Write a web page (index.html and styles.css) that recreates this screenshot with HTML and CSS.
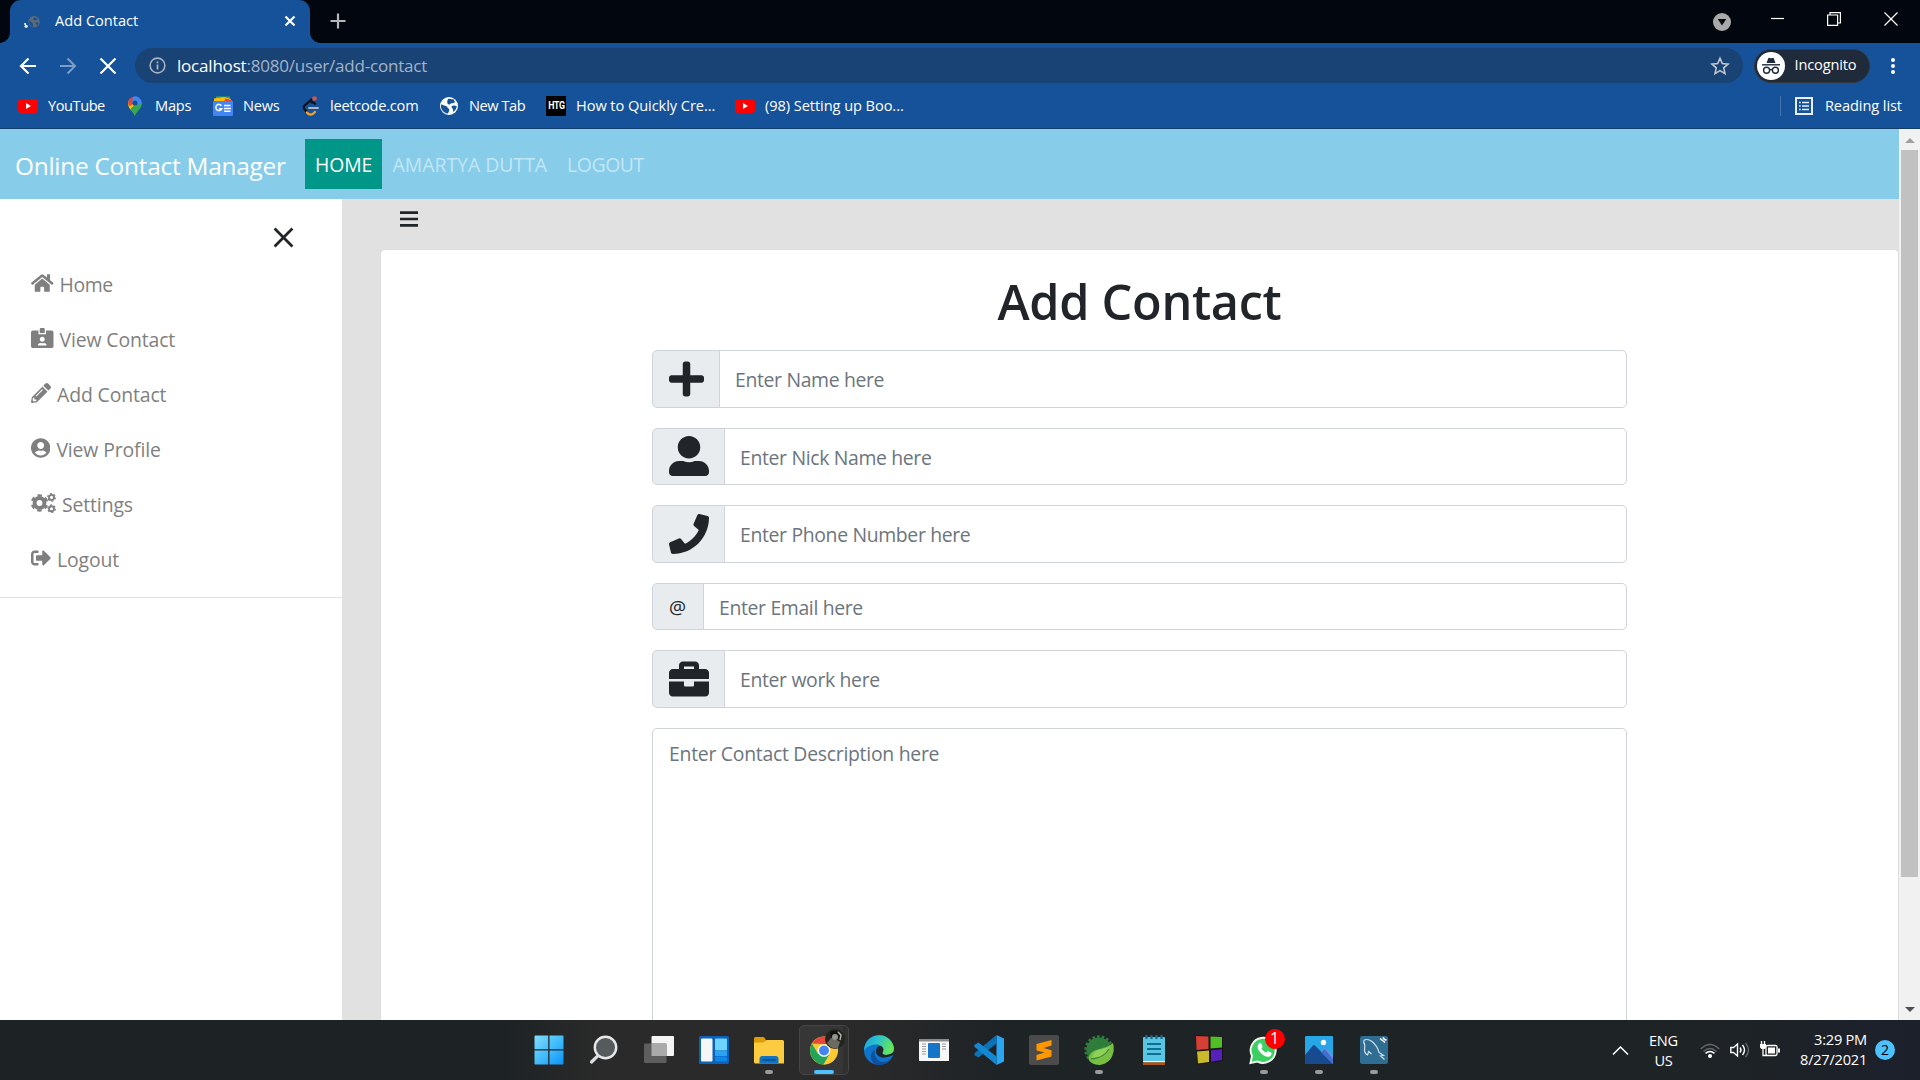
FILE: index.html
```html
<!DOCTYPE html>
<html lang="en">
<head>
<meta charset="utf-8">
<title>Add Contact</title>
<link rel="stylesheet" href="styles.css">
</head>
<body>
<div class="screen">

  <!-- Browser tab strip -->
  <header class="tabstrip">
    <div class="tab">
      <svg class="tab-icon" viewBox="0 0 18 18"><circle cx="3" cy="13.500" r="1.500" fill="#fff"/><circle cx="2" cy="11.400" r="1" fill="#fff"/><circle cx="10.500" cy="9.300" r="5.400" fill="#5f6a78"/><path d="M6 8l3 2.500 1 3.500-2-.5-2.500-3zM10.500 5l3.500 1.500-2 1.500-2.500-.8zM11.500 10h3.500l-1.500 3z" fill="#15529a"/></svg>
      <span class="tab-title">Add Contact</span>
      <svg class="tab-close" viewBox="0 0 12 12"><path d="M1.500 1.500l9 9M10.500 1.500l-9 9" stroke="#fff" stroke-width="2.200"/></svg>
    </div>
    <svg class="new-tab" viewBox="0 0 16 16"><path d="M8 .500v15M.500 8h15" stroke="#b4b6b8" stroke-width="2.200"/></svg>
    <div class="window-controls">
      <svg class="w-search" viewBox="0 0 18 18"><circle cx="9" cy="9" r="9" fill="#a9a9a9"/><path d="M4.800 6h8.400L9 12.500z" fill="#02060f"/></svg>
      <svg class="w-min" viewBox="0 0 14 14"><path d="M0 7.500h13" stroke="#fff" stroke-width="1.200"/></svg>
      <svg class="w-max" viewBox="0 0 14 14"><path d="M.600 3h10v10.400H.600zM3 3V.600h10.400V11h-2.800" fill="none" stroke="#fff" stroke-width="1.200"/></svg>
      <svg class="w-close" viewBox="0 0 14 14"><path d="M.500.500l13 13M13.500.500l-13 13" stroke="#fff" stroke-width="1.200"/></svg>
    </div>
  </header>

  <!-- Address bar -->
  <div class="toolbar">
    <svg class="t-back" viewBox="0 0 18 18"><path d="M17 9H2M9.500 1.500L2 9l7.500 7.500" fill="none" stroke="#fff" stroke-width="2.200"/></svg>
    <svg class="t-forward" viewBox="0 0 18 18"><path d="M1 9h15M8.500 1.500L16 9l-7.500 7.500" fill="none" stroke="#7d9cc6" stroke-width="2"/></svg>
    <svg class="t-stop" viewBox="0 0 18 18"><path d="M1.500 1.500l15 15M16.500 1.500l-15 15" stroke="#fff" stroke-width="2.200"/></svg>
    <div class="omnibox">
      <svg class="o-info" viewBox="0 0 18 18"><circle cx="9" cy="9" r="7.800" fill="none" stroke="#aab2bd" stroke-width="1.700"/><path d="M9 8v5.200M9 4.700v1.900" stroke="#aab2bd" stroke-width="1.900"/></svg>
      <span class="url"><b>localhost</b>:8080/user/add-contact</span>
      <svg class="o-star" viewBox="0 0 20 20"><path d="M10 2.200l2.300 5.400 5.800.500-4.400 3.800 1.300 5.700-5-3-5 3 1.300-5.700L1.900 8.100l5.800-.5z" fill="none" stroke="#c4c7cb" stroke-width="1.600"/></svg>
    </div>
    <div class="incognito">
      <svg viewBox="0 0 28 28"><circle cx="14" cy="14" r="14" fill="#fff"/><path d="M9.500 11l1.700-4.600c.2-.6.700-.7 1.300-.5l1.500.4 1.500-.4c.6-.2 1.100-.1 1.300.5l1.700 4.600z" fill="#1f2a3a"/><path d="M5 12.800h18" stroke="#1f2a3a" stroke-width="1.400"/><g fill="none" stroke="#1f2a3a" stroke-width="1.400"><circle cx="9.600" cy="18.300" r="3"/><circle cx="18.400" cy="18.300" r="3"/><path d="M12.600 18q1.400-1 2.800 0"/></g></svg>
      <span>Incognito</span>
    </div>
    <svg class="t-menu" viewBox="0 0 4 16" fill="#fff"><circle cx="2" cy="2" r="2"/><circle cx="2" cy="8" r="2"/><circle cx="2" cy="14" r="2"/></svg>
  </div>

  <!-- Bookmarks -->
  <div class="bookmarks">
    <div class="bm tight"><svg viewBox="0 0 20 20"><rect y="3" width="20" height="14" rx="3.500" fill="#f00"/><path d="M8 7v6l5-3z" fill="#fff"/></svg><span>YouTube</span></div>
    <div class="bm"><svg viewBox="0 0 20 20"><path d="M10 20c-.7-4-6.800-7-6.800-12.800h6.800z" fill="#fbbc04"/><path d="M10 20c.7-4 6.900-7 6.900-12.800L14.500 3 5 13.500C7.500 16 9 17 10 20z" fill="#34a853"/><path d="M3.200 7.200A6.800 6.800 0 0 1 4.900 2.700L10 7.200l-5 6Q3.200 10.500 3.200 7.200z" fill="#fbbc04"/><path d="M4.900 2.700A6.900 6.900 0 0 1 8 .7L10 7 4.300 10Q2 6 4.900 2.700z" fill="#ea4335"/><path d="M8 .700a6.900 6.900 0 0 1 8.900 6.500L10 10 7 6z" fill="#4285f4"/><circle cx="10" cy="7" r="2.500" fill="#174e91"/></svg><span>Maps</span></div>
    <div class="bm"><svg viewBox="0 0 20 20"><path d="M3 .500h14V6H3z" fill="#34a853"/><path d="M1 2.500L11 1l7 2v4H1z" fill="#fbbc04"/><path d="M12 2.500l7 1.500v3h-8z" fill="#ea4335"/><rect y="5" width="20" height="15" rx="1" fill="#4285f4"/><path d="M8.500 9.700a3.100 3.100 0 1 0 .3 3H6" fill="none" stroke="#fff" stroke-width="1.500"/><path d="M11 9.500h6.500M11 12.400h7M11 15.300h6.500" stroke="#fff" stroke-width="1.500"/></svg><span>News</span></div>
    <div class="bm"><svg viewBox="0 0 20 20" fill="none" stroke-linecap="round" stroke-width="2.300"><path d="M11.500 3.500L4.200 10Q3 11.500 4.200 13L6.500 15.500" stroke="#111"/><path d="M7 16.500q3.500 4.500 8-.5" stroke="#ffa116"/><path d="M9 12h9" stroke="#b3b3b3" stroke-width="1.900"/><path d="M11.500 6.300q2-.3 3.500 1.400" stroke="#111"/><circle cx="14.500" cy="2.500" r="2.300" fill="#d9534f" stroke="none"/></svg><span>leetcode.com</span></div>
    <div class="bm tight"><svg viewBox="0 0 20 20"><circle cx="10" cy="10" r="9" fill="#fff"/><path d="M2 8.500c2 0 3 1.500 5.500 1.700 1.500.3.500 2 2 2.300 1.500.5.500 3-.5 5C4 17 1.500 13 2 8.500zM9 3c2-.5 3 .5 5.500.3L16 6c-1 1.500-2 1-3.500 1.200C11 7.500 11.500 9 10 8.500S7.500 6.500 9 3zM13 10c1.500-1 3-.5 4.800 0-.3 3-2 5-3.800 6 0-2 .5-2-.5-3.500-.8-1-1.500-1.500-.5-2.500z" fill="#15529a"/></svg><span>New Tab</span></div>
    <div class="bm wide"><span class="htg"><span>HTG</span></span><span>How to Quickly Cre...</span></div>
    <div class="bm wide"><svg viewBox="0 0 20 20"><rect y="3" width="20" height="14" rx="3.500" fill="#f00"/><path d="M8 7v6l5-3z" fill="#fff"/></svg><span>(98) Setting up Boo...</span></div>
    <div class="reading">
      <svg viewBox="0 0 18 18"><rect x="1" y="1" width="16" height="16" fill="none" stroke="#e8eefb" stroke-width="2"/><path d="M4 5.500h1.700M4 9h1.700M4 12.500h1.700M7 5.500h7M7 9h7M7 12.500h7" stroke="#e8eefb" stroke-width="1.600"/></svg>
      <span>Reading list</span>
    </div>
  </div>

  <!-- Page -->
  <div class="viewport">
    <div class="page">
      <nav class="navbar">
        <span class="brand">Online Contact Manager</span>
        <span class="nav-link active">HOME</span>
        <span class="nav-link name">AMARTYA DUTTA</span>
        <span class="nav-link last">LOGOUT</span>
      </nav>
      <div class="body">
        <aside class="sidebar">
          <svg class="side-close" viewBox="0 0 20 20"><path d="M1.500 1.500l17 17M18.500 1.500l-17 17" stroke="#212529" stroke-width="2.600"/></svg>
          <div class="item short"><svg width="22.500" height="20" viewBox="0 0 576 512"><path d="M280.370 148.260L96 300.110V464a16 16 0 0 0 16 16l112.060-.29a16 16 0 0 0 15.920-16V368a16 16 0 0 1 16-16h64a16 16 0 0 1 16 16v95.640a16 16 0 0 0 16 16.050L464 480a16 16 0 0 0 16-16V300L295.670 148.260a12.190 12.190 0 0 0-15.300 0zM571.600 251.470L488 182.560V44.050a12 12 0 0 0-12-12h-56a12 12 0 0 0-12 12v72.610L318.470 43a48 48 0 0 0-61 0L4.340 251.470a12 12 0 0 0-1.600 16.900l25.500 31A12 12 0 0 0 45.150 301l235.220-193.740a12.190 12.190 0 0 1 15.300 0L530.900 301a12 12 0 0 0 16.900-1.600l25.500-31a12 12 0 0 0-1.700-16.930z"/></svg>Home</div>
          <div class="item"><svg width="22.500" height="20" viewBox="0 0 576 512"><path d="M528 64H384v96H192V64H48C21.500 64 0 85.500 0 112v352c0 26.500 21.500 48 48 48h480c26.500 0 48-21.500 48-48V112c0-26.500-21.500-48-48-48zM288 224c35.300 0 64 28.700 64 64s-28.700 64-64 64-64-28.700-64-64 28.700-64 64-64zm93.300 224H194.700c-10.400 0-18.800-10-15.600-19.800 8.300-25.600 32.400-44.200 60.900-44.200h8.200c12.300 5.100 25.700 8 39.800 8s27.600-2.900 39.800-8h8.200c28.400 0 52.500 18.500 60.900 44.200 3.200 9.900-5.200 19.800-15.600 19.800zM352 32c0-17.700-14.300-32-32-32h-64c-17.700 0-32 14.300-32 32v96h128V32z"/></svg>View Contact</div>
          <div class="item"><svg width="20" height="20" viewBox="0 0 512 512"><path d="M497.900 142.100l-46.100 46.100c-4.700 4.700-12.300 4.700-17 0l-111-111c-4.700-4.700-4.700-12.300 0-17l46.100-46.100c18.700-18.700 49.100-18.700 67.900 0l60.100 60.100c18.800 18.700 18.800 49.100 0 67.900zM284.200 99.800L21.600 362.400.4 483.900c-2.900 16.400 11.400 30.600 27.800 27.800l121.500-21.300 262.600-262.600c4.700-4.700 4.700-12.300 0-17l-111-111c-4.800-4.700-12.400-4.700-17.100 0zM124.100 339.900c-5.500-5.500-5.500-14.300 0-19.800l154-154c5.500-5.500 14.300-5.500 19.800 0s5.500 14.300 0 19.800l-154 154c-5.500 5.500-14.300 5.500-19.800 0zM88 424h48v36.300l-64.500 11.300-31.100-31.100L51.700 376H88v48z"/></svg>Add Contact</div>
          <div class="item"><svg width="19.400" height="20" viewBox="0 0 496 512"><path d="M248 8C111 8 0 119 0 256s111 248 248 248 248-111 248-248S385 8 248 8zm0 96c48.600 0 88 39.400 88 88s-39.400 88-88 88-88-39.400-88-88 39.400-88 88-88zm0 344c-58.700 0-111.300-26.600-146.500-68.200 18.800-35.400 55.600-59.800 98.500-59.800 2.400 0 4.800.4 7.100 1.100 13 4.200 26.600 6.900 40.900 6.900 14.300 0 28-2.700 40.900-6.900 2.300-.7 4.700-1.100 7.100-1.100 42.900 0 79.700 24.400 98.500 59.800C359.300 421.400 306.700 448 248 448z"/></svg>View Profile</div>
          <div class="item"><svg width="25" height="20" viewBox="0 0 25 20" fill="none" stroke="#7f7f7f"><circle cx="8.500" cy="10" r="4.900" stroke-width="4"/><circle cx="8.500" cy="10" r="7.600" stroke-width="2.200" stroke-dasharray="4.400 3.560" stroke-dashoffset="2.200" transform="rotate(30 8.500 10)"/><circle cx="20.500" cy="4.400" r="2.500" stroke-width="1.900"/><circle cx="20.500" cy="4.400" r="3.800" stroke-width="1.200" stroke-dasharray="2 1.980"/><circle cx="20.500" cy="15.700" r="2.500" stroke-width="1.900"/><circle cx="20.500" cy="15.700" r="3.800" stroke-width="1.200" stroke-dasharray="2 1.980"/></svg>Settings</div>
          <div class="item"><svg width="20" height="20" viewBox="0 0 512 512"><path d="M497 273L329 441c-15 15-41 4.500-41-17v-96H152c-13.300 0-24-10.700-24-24v-96c0-13.300 10.700-24 24-24h136V88c0-21.400 25.900-32 41-17l168 168c9.300 9.400 9.300 24.600 0 34zM192 436v-40c0-6.600-5.400-12-12-12H96c-17.700 0-32-14.300-32-32V160c0-17.700 14.300-32 32-32h84c6.600 0 12-5.400 12-12V76c0-6.600-5.400-12-12-12H96c-53 0-96 43-96 96v192c0 53 43 96 96 96h84c6.600 0 12-5.400 12-12z"/></svg>Logout</div>
          <div class="divider"></div>
        </aside>
        <main class="content">
          <svg class="bars" viewBox="0 0 18 16"><path d="M0 1.700h18M0 8h18M0 14.300h18" stroke="#212529" stroke-width="2.700"/></svg>
          <section class="card">
            <h1>Add Contact</h1>
            <form>
              <div class="group"><span class="addon"><svg width="35" height="40" viewBox="0 0 448 512"><path d="M416 208H272V64c0-17.670-14.330-32-32-32h-32c-17.670 0-32 14.330-32 32v144H32c-17.670 0-32 14.330-32 32v32c0 17.670 14.330 32 32 32h144v144c0 17.670 14.330 32 32 32h32c17.670 0 32-14.330 32-32V304h144c17.670 0 32-14.330 32-32v-32c0-17.670-14.330-32-32-32z"/></svg></span><input type="text" placeholder="Enter Name here"></div>
              <div class="group"><span class="addon"><svg width="40" height="40" viewBox="0 0 512 512"><path d="M256 288c79.500 0 144-64.500 144-144S335.500 0 256 0 112 64.500 112 144s64.500 144 144 144zm128 32h-55.100c-22.200 10.200-46.900 16-72.900 16s-50.600-5.800-72.900-16H128C57.300 320 0 377.300 0 448v16c0 26.500 21.500 48 48 48h416c26.500 0 48-21.500 48-48v-16c0-70.700-57.300-128-128-128z"/></svg></span><input type="text" placeholder="Enter Nick Name here"></div>
              <div class="group"><span class="addon"><svg width="40" height="40" viewBox="0 0 512 512"><path d="M493.400 24.600l-104-24c-11.300-2.600-22.900 3.300-27.500 13.900l-48 112c-4.200 9.800-1.400 21.300 6.900 28l60.600 49.600c-36 76.700-98.900 140.500-177.200 177.200l-49.600-60.600c-6.800-8.300-18.200-11.100-28-6.900l-112 48C3.900 366.500-2 378.100.6 389.400l24 104C27.100 504.200 36.700 512 48 512c256.100 0 464-207.500 464-464 0-11.200-7.700-20.900-18.600-23.400z"/></svg></span><input type="text" placeholder="Enter Phone Number here"></div>
              <div class="group email"><span class="addon">@</span><input type="text" placeholder="Enter Email here"></div>
              <div class="group"><span class="addon"><svg width="40" height="40" viewBox="0 0 512 512"><path d="M320 336c0 8.840-7.160 16-16 16h-96c-8.840 0-16-7.160-16-16v-48H0v144c0 25.600 22.400 48 48 48h416c25.600 0 48-22.400 48-48V288H320v48zm144-208h-80V80c0-25.600-22.400-48-48-48H176c-25.600 0-48 22.400-48 48v48H48c-25.600 0-48 22.400-48 48v80h512v-80c0-25.600-22.400-48-48-48zm-144 0H192V96h128v32z"/></svg></span><input type="text" placeholder="Enter work here"></div>
              <textarea placeholder="Enter Contact Description here"></textarea>
            </form>
          </section>
        </main>
      </div>
    </div>
    <div class="scrollbar">
      <svg viewBox="0 0 10 5"><path d="M0 5l5-5 5 5z" fill="#a0a0a0"/></svg>
      <div class="thumb"></div>
      <svg class="down" viewBox="0 0 10 5"><path d="M0 0l5 5 5-5z" fill="#505050"/></svg>
    </div>
  </div>

  <!-- Taskbar -->
  <footer class="taskbar">
    <div class="apps">
      <div class="app"><svg viewBox="0 0 30 30"><defs><linearGradient id="win" gradientUnits="userSpaceOnUse" x1="0" y1="0" x2="30" y2="30"><stop offset="0" stop-color="#84deff"/><stop offset=".5" stop-color="#43bdfb"/><stop offset="1" stop-color="#0a90f8"/></linearGradient></defs><path d="M.500 1.500A1 1 0 0 1 1.500.500H14.200V14.200H.500zM15.500.500H28.500a1 1 0 0 1 1 1V14.200H15.500zM.500 15.500H14.200V29.500H1.500a1 1 0 0 1-1-1zM15.500 15.500H29.500V28.500a1 1 0 0 1-1 1H15.500z" fill="url(#win)"/></svg></div>
      <div class="app"><svg viewBox="0 0 30 30"><circle cx="16.500" cy="12.500" r="10.700" fill="#555a5d" stroke="#e6e8ea" stroke-width="2.400"/><path d="M8.800 20.800L2.500 27" stroke="#dcdfe2" stroke-width="3.200" stroke-linecap="round"/></svg></div>
      <div class="app"><svg viewBox="0 0 30 30"><rect x="7.500" y="1" width="22.500" height="20" rx="1" fill="#f4f4f4"/><rect y="8.500" width="22.500" height="19.500" rx="1" fill="#5e5e5e"/><path d="M7.500 8.500h15V21h-15z" fill="#aaa"/></svg></div>
      <div class="app"><svg viewBox="0 0 30 30"><rect y="1" width="30" height="28" rx="1.500" fill="#0c61b8"/><rect x="2" y="3.500" width="11.500" height="23" rx="1.200" fill="#f6f6f6"/><rect x="16" y="3.500" width="12" height="12" rx="1" fill="#6cd4fd"/><rect x="16" y="16" width="12" height="5" fill="#28a3f3"/><rect x="16" y="21.500" width="12" height="5" rx="1" fill="#0d87e8"/></svg></div>
      <div class="app"><svg viewBox="0 0 30 30"><path d="M0 3.500q0-1.500 1.500-1.500h7.500q1.500 0 2 1.500l1 2V12H0z" fill="#dd9c05"/><path d="M0 7.500h9.500l3-2.500H28.500Q30 5 30 6.500V28.500H1.500Q0 28.500 0 27z" fill="#fdcb3f"/><path d="M5.500 28.500V24q0-3 3-3h13q3 0 3 3v4.500z" fill="#1273c4"/><path d="M9 25h12" stroke="#0b4f8f" stroke-width="1.600" stroke-linecap="round"/></svg><i class="mark"></i></div>
      <div class="app open"><svg viewBox="0 0 30 30"><circle cx="15" cy="15.500" r="14" fill="#fbc933"/><path d="M2.900 8.500A14 14 0 0 1 27.100 8.500L15 9z" fill="#e8453c"/><path d="M2.900 8.500A14 14 0 0 0 15 29.500l6-10.500-12 0z" fill="#22a45a"/><path d="M27.100 9H15a6.500 6.500 0 0 1 5.500 10L14.500 29.500A14 14 0 0 0 27.100 9z" fill="#fbc933"/><circle cx="15" cy="15.500" r="6.300" fill="#fff"/><circle cx="15" cy="15.500" r="5" fill="#4484f3"/></svg><svg class="avatar" viewBox="0 0 20 20"><circle cx="10" cy="10" r="10" fill="#23231f"/><path d="M2 14l4-5 4 1 5 3-2 6q-7 2-11-5z" fill="#6a6a62"/><path d="M5 3q5-3 8 1l2 5-5 2-4-3z" fill="#11110f"/><circle cx="10" cy="8" r="3" fill="#97968c"/><path d="M13 3l3 3-1 5" fill="none" stroke="#b7b6ac" stroke-width="1.400"/></svg><i class="mark"></i></div>
      <div class="app"><svg viewBox="0 0 30 30"><defs><linearGradient id="eg" x1="0" y1="0" x2="1" y2=".3"><stop offset="0" stop-color="#1f9be0"/><stop offset=".5" stop-color="#2cc3c9"/><stop offset="1" stop-color="#63e65a"/></linearGradient></defs><circle cx="15" cy="15" r="15" fill="#0c74ca"/><path d="M.500 12A15 15 0 0 1 30 13c0 5-4 7-7.500 7-3.500 0-4.500-1.500-4-2.500 2.500-4-1-8-6-8C7 9.500 2 12 .100 16z" fill="url(#eg)"/><path d="M11 15c-2 5 2 12 8 12 4 0 6-1.500 8-3.500C22 31 14 31 10.500 29 5 25 6 17 11 15z" fill="#104f9f"/><path d="M18.500 17.500c2.300-4-.5-7-3-6.500-4 1.500-4.500 7-1.500 9.500 4 3.500 10 2 15.500-.8 .8-1.200 1-2.500.8-3.500-3 4.500-12.800 4.800-11.800 1.300z" fill="#212529"/></svg></div>
      <div class="app"><svg viewBox="0 0 30 30"><rect y="4" width="30" height="22" fill="#f7f7f7"/><rect y="4" width="30" height="2.500" fill="#8c8c8c"/><rect x="9" y="8" width="12" height="15" rx="1" fill="#1675c9"/><path d="M3 9h4M3 11.500h4M3 14h4M3 16.500h4M3 19h4M23 9h4M23 11.500h4M23 14h4" stroke="#9a9a9a"/></svg></div>
      <div class="app"><svg viewBox="0 0 30 30"><path d="M22.500 0L30 3.500V26.500L22.500 30z" fill="#2aa5f2"/><path d="M22.500 0v8.500L4.500 22.500 1 20.500q-1.500-1.200 0-2.700z" fill="#0b72b8"/><path d="M22.500 30v-8.500L4.500 7.500 1 9.500q-1.500 1.200 0 2.700z" fill="#1487d2"/></svg></div>
      <div class="app"><svg viewBox="0 0 30 30"><rect width="30" height="30" rx="2" fill="#4b4b4b"/><path d="M22.500 5v5.500L14.500 13l8 2.300v6.200L7.500 25.500V20l8-2.500L7.500 15.500V9z" fill="#ff9800"/></svg></div>
      <div class="app"><svg viewBox="0 0 30 30"><circle cx="15" cy="15" r="12.600" fill="#2f7d3b"/><circle cx="15" cy="15" r="13.200" fill="none" stroke="#2f7d3b" stroke-width="3" stroke-dasharray="2.600 2"/><path d="M29 8c2.500 9-1.500 21-13.500 22C9 30 5 26 4.500 24 6 12 20 16 29 8z" fill="#77bf43"/><path d="M26 11q-2 11-18 12 1-8 10-9 5-1 8-3z" fill="#8fd05b"/><path d="M7 24q13-1 18-10" fill="none" stroke="#3b8a35" stroke-width="1.300"/></svg><i class="mark"></i></div>
      <div class="app"><svg viewBox="0 0 30 30"><rect x="4" y="2" width="22" height="26" rx="1" fill="#58c5e3"/><path d="M4 26h22v1.200H4z" fill="#fff"/><path d="M4 27.200h22V30H4z" fill="#a9541a"/><path d="M7.500 0v4M12.500 0v4M17.500 0v4M22.500 0v4" stroke="#116b8c" stroke-width="2.200"/><path d="M8 9h14M8 14h14M8 19h14" stroke="#0e6f91" stroke-width="1.800"/></svg></div>
      <div class="app"><svg viewBox="0 0 30 30"><path d="M1.500 0L29 1.500V26L3 29.500z" fill="#1a1414"/><path d="M2 1l12.500.5V14L2.500 15z" fill="#d63f33"/><path d="M16.500 1.500L28 2v10.500l-11.500 1z" fill="#4fbf25"/><path d="M3 16.500l12-1V27L4 28.500z" fill="#c9b92b"/><path d="M17 15.300l11-1V25l-11 1.700z" fill="#5422bb"/></svg></div>
      <div class="app"><svg viewBox="0 0 30 30"><path d="M1.500 28L3 21A12.500 12.500 0 1 1 8.500 26.500z" fill="#3ccf62" stroke="#f2f7f2" stroke-width="2"/><path d="M10 8.500q1.500-1.500 2.500.5l1 2.300q.3.700-1.200 2.200 1.800 3 5 4.300l1.500-1.800 3.700 1.700q.5 3-2.500 4-4 .8-8.500-4-5-5.500-1.500-9.200z" fill="#fff"/></svg><b class="count">1</b><i class="mark"></i></div>
      <div class="app"><svg viewBox="0 0 30 30"><rect x="1" y="1" width="28" height="28" rx="1" fill="#27a6e8"/><path d="M15 18l6-5 8 8v8H14z" fill="#7c8bdc"/><path d="M1 20l8-9.500q1-1 2 0L29 29H1z" fill="#174a8e"/><path d="M17.500 17.500l2-2.800q1-1 2 0L29 24v5z" fill="#3f6fd0"/><circle cx="19.500" cy="7.500" r="2.700" fill="#fff"/></svg><i class="mark"></i></div>
      <div class="app"><svg viewBox="0 0 30 30"><rect x="1" y="1" width="28" height="28" rx="2.500" fill="#2f6d92"/><path d="M5 5q4-1.500 8 1.500 5.500 4.500 7 11l4.500 3-3 .5 4 3.500M5 5q-.8 2.500.8 5L5.500 15.500q.5 3.500 3 4.500l1.200-3.500 2.800 2.500" fill="none" stroke="#cfe0ea" stroke-width="1.200"/><path d="M21 3.500l5 4M24 2.500l1.500 2 2 .5" stroke="#fff" stroke-width="1.600"/></svg><i class="mark"></i></div>
    </div>
    <div class="tray">
      <svg class="chevron" viewBox="0 0 16 9"><path d="M.500 8.500L8 1l7.500 7.500" fill="none" stroke="#fff" stroke-width="1.500"/></svg>
      <div class="lang"><span>ENG</span><span>US</span></div>
      <svg class="wifi" viewBox="0 0 20 20" fill="none" stroke-width="1.500"><path d="M.700 9q9.300-9 18.600 0M3.500 11.500q6.500-6 13 0" stroke="#62666a"/><path d="M5.500 13.300q4.500-3.600 9 0" stroke="#fff"/><circle cx="10" cy="16" r="2" fill="#fff"/></svg>
      <svg class="sound" viewBox="0 0 20 20" fill="none" stroke="#fff" stroke-width="1.400"><path d="M.800 7.500H3.500L7.500 4V16L3.500 12.500H.800z"/><path d="M10 7.500q2 2.500 0 5M12.500 5q4 5 0 10"/><path d="M15.500 3q6 7 0 14" stroke="#62666a"/></svg>
      <svg class="battery" viewBox="0 0 20 20"><rect x="6" y="5.500" width="11" height="10" rx="1.500" fill="none" stroke="#fff" stroke-width="1.300"/><rect x="8" y="7.500" width="7" height="6" fill="#fff"/><path d="M18 8.500h2v4h-2zM0 4h6v3.500L4.500 9h-3L0 7.500z" fill="#fff"/><path d="M1.500 1v4M4.500 1v4M3 8v7.500h4" stroke="#fff" stroke-width="1.300" fill="none"/></svg>
      <div class="clock"><span>3:29 PM</span><span>8/27/2021</span></div>
      <b class="notify">2</b>
    </div>
  </footer>
</div>
</body>
</html>
```

FILE: styles.css
```css
* { box-sizing: border-box; }
body { margin: 0; overflow: hidden; font-family: "Open Sans", "Noto Sans", sans-serif; color: #212529; }
svg { display: block; flex: none; }
.screen { display: flex; flex-direction: column; width: 1920px; height: 1080px; }

/* Browser chrome */
.tabstrip { display: flex; height: 43px; padding-left: 10px; background: #02060f; color: #fff; }
.tab { position: relative; display: flex; align-items: center; width: 300px; padding: 0 14px 1px 13px; border-radius: 11px 11px 0 0; background: #15529a; font-size: 14.6px; }
.tab::before, .tab::after { content: ""; position: absolute; bottom: 0; width: 10px; height: 10px; }
.tab::before { left: -10px; background: radial-gradient(circle at 0 0, transparent 9.5px, #15529a 10px); }
.tab::after { right: -10px; background: radial-gradient(circle at 100% 0, transparent 9.5px, #15529a 10px); }
.tab-icon { width: 19px; height: 19px; margin-right: 13px; }
.tab-title { padding-bottom: 2px; }
.tab-close { width: 12px; height: 12px; margin-left: auto; }
.new-tab { width: 16px; height: 16px; margin: 13px 0 0 20px; }
.window-controls { display: flex; margin-left: auto; }
.w-search { width: 18px; height: 18px; margin: 13px 40px 0 0; }
.w-min { width: 14px; height: 14px; margin: 11px 42px 0 0; }
.w-max { width: 14px; height: 14px; margin: 11.5px 43.5px 0 0; }
.w-close { width: 14px; height: 14px; margin: 11.5px 22px 0 0; }

.toolbar { display: flex; align-items: center; height: 45px; padding: 0 25px 0 18.5px; background: #15529a; }
.t-back { width: 18px; height: 18px; margin-right: 22.5px; }
.t-forward { width: 18px; height: 18px; margin-right: 22px; }
.t-stop { width: 18px; height: 18px; margin-right: 18px; }
.omnibox { display: flex; align-items: center; width: 1608px; height: 35px; padding: 0 13px 0 14px; border-radius: 18px; background: #194375; }
.o-info { width: 17px; height: 17px; margin-right: 11px; }
.url { font-size: 17px; letter-spacing: -.2px; color: #a3b4c9; }
.url b { font-weight: 400; color: #fff; }
.o-star { width: 20px; height: 20px; margin-left: auto; }
.incognito { display: flex; align-items: center; gap: 10px; width: 116px; height: 34px; margin-left: 10.5px; padding-left: 3px; border: 1px solid #34383d; border-radius: 17px; background: #1f2a3a; color: #fff; font-size: 14.6px; letter-spacing: -.15px; }
.incognito svg { width: 28px; height: 28px; margin-left: -1px; }
.incognito span { padding-bottom: 3px; }
.t-menu { width: 4px; height: 16px; margin-left: auto; }

.bookmarks { display: grid; grid-template-columns: 107px 88px 87px 139px 107px 189px 1fr auto; align-items: center; height: 41px; padding: 0 18px 4px 18px; border-bottom: 1px solid #123b6e; background: #15529a; color: #fff; font-size: 14.6px; letter-spacing: -.24px; white-space: nowrap; }
.bm { display: flex; align-items: center; gap: 10px; }
.bm.tight { letter-spacing: -.45px; }
.bm.wide { letter-spacing: -.07px; }
.bm > span, .reading > span { padding-bottom: 2px; }
.bm svg { width: 20px; height: 20px; }
.bm > .htg { display: flex; align-items: center; justify-content: center; width: 20px; height: 20px; padding: 0; background: #000; font: 700 10px/20px Roboto, sans-serif; letter-spacing: -.3px; }
.htg span { transform: scale(.88, 1.1); }
.reading { display: flex; align-items: center; gap: 12px; height: 20px; padding-left: 14px; border-left: 1px solid #4674ad; letter-spacing: -.09px; }
.reading svg { width: 18px; height: 18px; }

/* Page */
.viewport { display: flex; flex: 1; min-height: 0; }
.page { display: flex; flex-direction: column; flex: 1; min-width: 0; overflow: hidden; }
.navbar { display: flex; align-items: center; flex: none; height: 70px; padding-left: 15px; background: #87cdea; color: #fff; }
.brand { width: 290px; padding-top: 2px; font-size: 24.4px; letter-spacing: -.25px; white-space: nowrap; }
.nav-link { height: 50px; padding: 0 10px; font-size: 19.4px; line-height: 52px; letter-spacing: -.1px; white-space: nowrap; color: #c3e6f5; }
.nav-link.active { width: 77px; background: #009688; color: #fff; }
.nav-link.name { width: 175px; padding-left: 10.5px; letter-spacing: 0; }
.nav-link.last { letter-spacing: -.38px; }
.body { display: flex; flex: 1; min-height: 0; }

.sidebar { flex: none; width: 342px; padding-top: 28px; background: #fff; }
.side-close { width: 21px; height: 21px; margin: 0 0 8.500px 272.500px; }
.item { display: flex; align-items: center; gap: 6px; height: 55px; padding-left: 31px; font-size: 19.4px; letter-spacing: -.12px; color: #7f7f7f; }
.item.short { letter-spacing: -.4px; }
.item svg { fill: #7f7f7f; margin-top: -1.5px; }
.item svg[fill="none"] { fill: none; }
.divider { height: 1px; margin-top: 10.5px; background: #e2e2e2; }

.content { display: flex; flex-direction: column; flex: 1; min-width: 0; padding: 11.5px 0 0 38px; background: #e1e1e1; }
.bars { width: 18px; height: 16px; margin: 0 0 22px 20px; }
.card { flex: none; height: 900px; padding: 15px 271px 0 271px; border: 1px solid #dedede; border-radius: 5px; background: #fff; }
h1 { height: 60px; margin: 6.5px 0 19px; font-size: 48.6px; font-weight: 600; line-height: 60px; letter-spacing: -.3px; text-align: center; }
form { display: flex; flex-direction: column; gap: 20px; }
.group { display: flex; height: 57.5px; }
.group.email { height: 47.5px; }
.addon { display: flex; align-items: center; flex: none; padding: 0 15px 0 16px; border: 1px solid #ced4da; border-radius: 5px 0 0 5px; background: #e9ecef; font-size: 19px; }
.addon svg { fill: #212529; }
.email .addon { width: 52px; padding-top: 2px; }
input, textarea { width: 100%; border: 1px solid #ced4da; background: #fff; padding: 2px 15px 0; font: 19.4px "Open Sans", "Noto Sans", sans-serif; letter-spacing: -.34px; }
input { flex: 1; min-width: 0; margin-left: -1px; border-radius: 0 5px 5px 0; }
textarea { height: 380px; padding: 11px 15px 0 16px; border-radius: 5px; resize: none; letter-spacing: -.27px; overflow: hidden; }
::placeholder { color: #6c757d; opacity: 1; }

.scrollbar { display: flex; flex-direction: column; align-items: center; flex: none; width: 21px; padding: 9px 0 8px; background: #f1f1f1; }
.scrollbar svg { width: 10px; height: 5px; }
.thumb { width: 17px; height: 727px; margin-top: 7px; background: #c1c1c1; }
.scrollbar .down { margin-top: auto; }

/* Taskbar */
.taskbar { display: flex; align-items: center; justify-content: space-between; flex: none; height: 60px; padding-left: 521px; background: linear-gradient(90deg, #1d2224 0, #1d2224 500px, #2a2a2a 600px, #2a2a2a 860px, #1e2326 1000px, #1e2326 1700px, #1c202b 1920px); color: #fff; }
.apps { display: flex; }
.app { position: relative; display: flex; align-items: center; justify-content: center; width: 55.05px; height: 50px; }
.app > svg { width: 30px; height: 30px; }
.app.open { width: 50px; margin: 0 2.5px; border: 1px solid #454545; border-radius: 5px; background: #363636; box-shadow: inset -5px 0 #303030; }
.mark { position: absolute; bottom: 1px; left: 50%; width: 8px; height: 4px; margin-left: -4px; border-radius: 2px; background: #9a9a9a; }
.open .mark { bottom: 0; width: 20px; margin-left: -10px; background: #4cc2ff; }
.app > .avatar { position: absolute; top: 3px; right: 3px; width: 20px; height: 20px; }
.count { position: absolute; top: 4px; left: 28px; width: 20px; height: 20px; border-radius: 10px; background: #f00; font-size: 16px; font-weight: 400; line-height: 19px; text-align: center; }
.tray { display: flex; align-items: center; padding-right: 25px; font-size: 14.6px; letter-spacing: -.24px; }
.chevron { width: 17px; height: 9px; margin-right: 19px; }
.lang { display: flex; flex-direction: column; align-items: center; width: 31px; margin-right: 21px; padding-bottom: 1px; line-height: 20px; }
.wifi, .sound { width: 20px; height: 20px; margin-right: 10px; }
.battery { width: 20px; height: 20px; }
.clock { display: flex; flex-direction: column; align-items: flex-end; width: 87px; padding-bottom: 2px; line-height: 20px; }
.notify { width: 20px; height: 20px; margin-left: 8px; border-radius: 10px; background: #4cc2ff; color: #000; font-size: 14px; font-weight: 400; line-height: 20px; text-align: center; }
```
